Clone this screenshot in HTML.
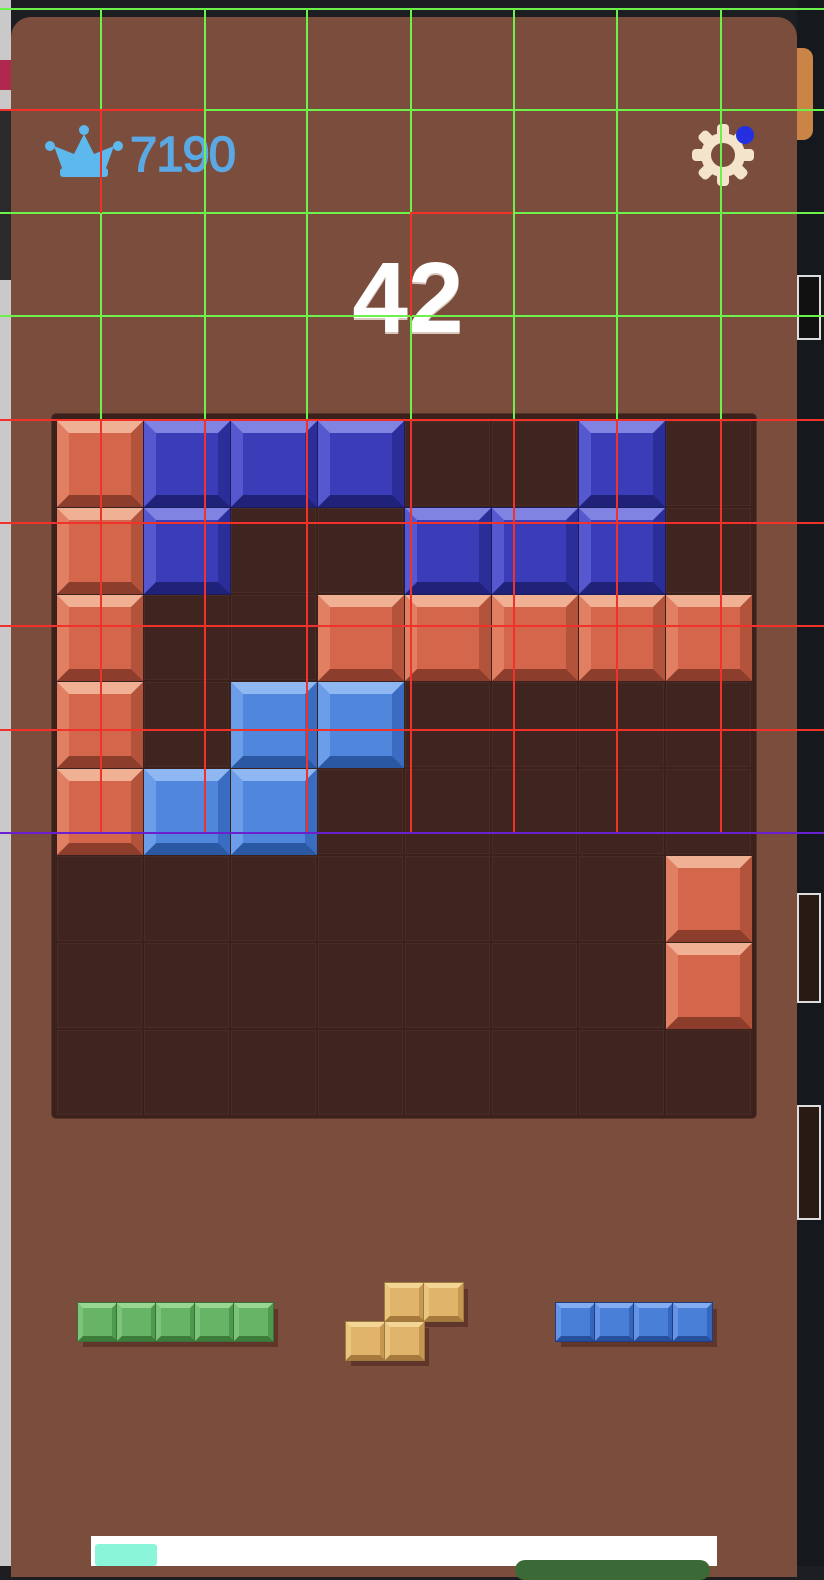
<!DOCTYPE html>
<html><head><meta charset="utf-8"><style>
*{margin:0;padding:0}
body{width:824px;height:1566px;overflow:hidden;background:#1c1e22;position:relative;font-family:"Liberation Sans",sans-serif}
.a{position:absolute}
.panel{left:11px;top:17px;width:786px;height:1560px;background:#7b4d3d;border-radius:20px 20px 0 0}
.board{left:52px;top:414px;width:704px;height:704px;background:#3a211c;border-radius:4px;box-shadow:0 0 0 1px #5a3429}
.e{position:absolute;width:85px;height:85px;background:#40241f;box-shadow:inset 0 0 0 1px #4a2b25}
.b{position:absolute;width:86px;height:86px;box-sizing:border-box;border:12px solid}
.r{background:#d4664c;border-top-color:#efb094;border-left-color:#e07f62;border-right-color:#b4533b;border-bottom-color:#8d3d2b}
.d{background:#3b3db8;border-top-color:#8083e2;border-left-color:#5658cf;border-right-color:#2b2d99;border-bottom-color:#1f2278;outline:1px solid #1a1c5c}
.l{background:#5087dd;border-top-color:#8fb8f2;border-left-color:#6c9de8;border-right-color:#3a6cc1;border-bottom-color:#2b58a3}
.s{position:absolute;width:39px;height:38px;box-sizing:border-box;border:5px solid;box-shadow:5px 6px 0 rgba(80,40,30,.6)}
.g{background:#68b466;border-top-color:#98d692;border-left-color:#7cc479;border-right-color:#4e9a4d;border-bottom-color:#3c7d3c;outline:1px solid #3b6e3a}
.y{background:#e0b46a;border-top-color:#f3d595;border-left-color:#e9c57e;border-right-color:#c59750;border-bottom-color:#a67a3c;outline:1px solid #9c7a40}
.u{background:#4a7fd8;border-top-color:#84acf0;border-left-color:#6594e6;border-right-color:#3566bd;border-bottom-color:#274f9c;outline:1px solid #1f3e82}
.gv{position:absolute;width:2px;background:#6cf24a}
.gh{position:absolute;height:2px;background:#6cf24a}
.rv{position:absolute;width:2px;background:#f0322a}
.rh{position:absolute;height:2px;background:#f0322a}
</style></head><body>
<div class="a" style="left:0;top:0;width:11px;height:1566px;background:#c9c9c9"></div>
<div class="a" style="left:0;top:60px;width:11px;height:30px;background:#b0284e"></div>
<div class="a" style="left:0;top:110px;width:11px;height:170px;background:#2a2a2a"></div>
<div class="a" style="left:797px;top:0;width:27px;height:1566px;background:#15181c"></div>
<div class="a" style="left:797px;top:48px;width:16px;height:92px;background:#c98446;border-radius:0 10px 10px 0"></div>
<div class="a" style="left:797px;top:275px;width:24px;height:65px;border:2px solid #ddd;background:#111;box-sizing:border-box"></div>
<div class="a" style="left:797px;top:893px;width:24px;height:110px;border:2px solid #ddd;background:#2a1a14;box-sizing:border-box"></div>
<div class="a" style="left:797px;top:1105px;width:24px;height:115px;border:2px solid #ddd;background:#2a1a14;box-sizing:border-box"></div>
<div class="a panel"></div>

<svg class="a" style="left:44px;top:124px" width="80" height="56" viewBox="0 0 80 56">
<g fill="#5db8ee"><circle cx="40" cy="6" r="5"/><circle cx="6" cy="22" r="5"/><circle cx="74" cy="22" r="5"/>
<path d="M40 10 L50 30 L70 22 L62 44 L18 44 L10 22 L30 30 Z"/><rect x="16" y="44" width="48" height="9" rx="3"/></g></svg>
<div class="a" style="left:130px;top:127px;font-size:49px;color:#5aa8e4;letter-spacing:-1px;line-height:56px;-webkit-text-stroke:1.5px #5aa8e4">7190</div>

<svg class="a" style="left:690px;top:122px" width="70" height="70" viewBox="0 0 70 70">
<g fill="#f4e4cb" transform="translate(33,33)">
<circle r="22"/>
<g id="t"><rect x="-6" y="-31" width="12" height="14" rx="4"/></g>
<use href="#t" transform="rotate(45)"/><use href="#t" transform="rotate(90)"/><use href="#t" transform="rotate(135)"/><use href="#t" transform="rotate(180)"/><use href="#t" transform="rotate(225)"/><use href="#t" transform="rotate(270)"/><use href="#t" transform="rotate(315)"/>
<circle r="12" fill="#7b4d3d"/></g>
<circle cx="55" cy="13" r="9" fill="#2430e0"/></svg>

<div class="a" style="left:308px;top:248px;width:200px;text-align:center;font-size:100px;font-weight:bold;color:#fff;line-height:100px;text-shadow:0 2px 0 #d8c8c0">42</div>

<div class="a board">
<div class="e" style="left:5px;top:7px"></div><div class="e" style="left:92px;top:7px"></div><div class="e" style="left:179px;top:7px"></div><div class="e" style="left:266px;top:7px"></div><div class="e" style="left:353px;top:7px"></div><div class="e" style="left:440px;top:7px"></div><div class="e" style="left:527px;top:7px"></div><div class="e" style="left:614px;top:7px"></div>
<div class="e" style="left:5px;top:94px"></div><div class="e" style="left:92px;top:94px"></div><div class="e" style="left:179px;top:94px"></div><div class="e" style="left:266px;top:94px"></div><div class="e" style="left:353px;top:94px"></div><div class="e" style="left:440px;top:94px"></div><div class="e" style="left:527px;top:94px"></div><div class="e" style="left:614px;top:94px"></div>
<div class="e" style="left:5px;top:181px"></div><div class="e" style="left:92px;top:181px"></div><div class="e" style="left:179px;top:181px"></div><div class="e" style="left:266px;top:181px"></div><div class="e" style="left:353px;top:181px"></div><div class="e" style="left:440px;top:181px"></div><div class="e" style="left:527px;top:181px"></div><div class="e" style="left:614px;top:181px"></div>
<div class="e" style="left:5px;top:268px"></div><div class="e" style="left:92px;top:268px"></div><div class="e" style="left:179px;top:268px"></div><div class="e" style="left:266px;top:268px"></div><div class="e" style="left:353px;top:268px"></div><div class="e" style="left:440px;top:268px"></div><div class="e" style="left:527px;top:268px"></div><div class="e" style="left:614px;top:268px"></div>
<div class="e" style="left:5px;top:355px"></div><div class="e" style="left:92px;top:355px"></div><div class="e" style="left:179px;top:355px"></div><div class="e" style="left:266px;top:355px"></div><div class="e" style="left:353px;top:355px"></div><div class="e" style="left:440px;top:355px"></div><div class="e" style="left:527px;top:355px"></div><div class="e" style="left:614px;top:355px"></div>
<div class="e" style="left:5px;top:442px"></div><div class="e" style="left:92px;top:442px"></div><div class="e" style="left:179px;top:442px"></div><div class="e" style="left:266px;top:442px"></div><div class="e" style="left:353px;top:442px"></div><div class="e" style="left:440px;top:442px"></div><div class="e" style="left:527px;top:442px"></div><div class="e" style="left:614px;top:442px"></div>
<div class="e" style="left:5px;top:529px"></div><div class="e" style="left:92px;top:529px"></div><div class="e" style="left:179px;top:529px"></div><div class="e" style="left:266px;top:529px"></div><div class="e" style="left:353px;top:529px"></div><div class="e" style="left:440px;top:529px"></div><div class="e" style="left:527px;top:529px"></div><div class="e" style="left:614px;top:529px"></div>
<div class="e" style="left:5px;top:616px"></div><div class="e" style="left:92px;top:616px"></div><div class="e" style="left:179px;top:616px"></div><div class="e" style="left:266px;top:616px"></div><div class="e" style="left:353px;top:616px"></div><div class="e" style="left:440px;top:616px"></div><div class="e" style="left:527px;top:616px"></div><div class="e" style="left:614px;top:616px"></div>

<div class="b r" style="left:5px;top:7px"></div><div class="b d" style="left:92px;top:7px"></div><div class="b d" style="left:179px;top:7px"></div><div class="b d" style="left:266px;top:7px"></div><div class="b d" style="left:527px;top:7px"></div>
<div class="b r" style="left:5px;top:94px"></div><div class="b d" style="left:92px;top:94px"></div><div class="b d" style="left:353px;top:94px"></div><div class="b d" style="left:440px;top:94px"></div><div class="b d" style="left:527px;top:94px"></div>
<div class="b r" style="left:5px;top:181px"></div><div class="b r" style="left:266px;top:181px"></div><div class="b r" style="left:353px;top:181px"></div><div class="b r" style="left:440px;top:181px"></div><div class="b r" style="left:527px;top:181px"></div><div class="b r" style="left:614px;top:181px"></div>
<div class="b r" style="left:5px;top:268px"></div><div class="b l" style="left:179px;top:268px"></div><div class="b l" style="left:266px;top:268px"></div>
<div class="b r" style="left:5px;top:355px"></div><div class="b l" style="left:92px;top:355px"></div><div class="b l" style="left:179px;top:355px"></div>
<div class="b r" style="left:614px;top:442px"></div>
<div class="b r" style="left:614px;top:529px"></div>
</div>

<div class="s g" style="left:78px;top:1303px"></div><div class="s g" style="left:117px;top:1303px"></div><div class="s g" style="left:156px;top:1303px"></div><div class="s g" style="left:195px;top:1303px"></div><div class="s g" style="left:234px;top:1303px"></div>
<div class="s y" style="left:385px;top:1283px"></div><div class="s y" style="left:424px;top:1283px"></div><div class="s y" style="left:346px;top:1322px"></div><div class="s y" style="left:385px;top:1322px"></div>
<div class="s u" style="left:556px;top:1303px"></div><div class="s u" style="left:595px;top:1303px"></div><div class="s u" style="left:634px;top:1303px"></div><div class="s u" style="left:673px;top:1303px"></div>

<div class="a" style="left:91px;top:1536px;width:626px;height:30px;background:#fff"></div>
<div class="a" style="left:95px;top:1544px;width:62px;height:22px;background:#8af5d8;border-radius:3px"></div>
<div class="a" style="left:515px;top:1560px;width:195px;height:20px;background:#3b6a36;border-radius:12px"></div>

<div class="gh" style="left:0;top:8px;width:824px"></div>
<div class="gh" style="left:205px;top:109px;width:619px"></div><div class="rh" style="left:0;top:109px;width:205px"></div>
<div class="gh" style="left:0;top:212px;width:411px"></div><div class="rh" style="left:411px;top:212px;width:103px"></div><div class="gh" style="left:514px;top:212px;width:310px"></div>
<div class="gh" style="left:0;top:315px;width:824px"></div>
<div class="gv" style="left:100px;top:8px;height:101px"></div><div class="rv" style="left:100px;top:109px;height:104px"></div><div class="gv" style="left:100px;top:213px;height:206px"></div>
<div class="gv" style="left:204px;top:8px;height:411px"></div>
<div class="gv" style="left:306px;top:8px;height:411px"></div>
<div class="gv" style="left:410px;top:8px;height:204px"></div><div class="rv" style="left:410px;top:212px;height:104px"></div><div class="gv" style="left:410px;top:316px;height:103px"></div>
<div class="gv" style="left:513px;top:8px;height:411px"></div>
<div class="gv" style="left:616px;top:8px;height:411px"></div>
<div class="gv" style="left:720px;top:8px;height:411px"></div>
<div class="rh" style="left:0;top:419px;width:824px"></div>
<div class="rh" style="left:0;top:522px;width:824px"></div>
<div class="rh" style="left:0;top:625px;width:824px"></div>
<div class="rh" style="left:0;top:729px;width:824px"></div>
<div class="rh" style="left:0;top:832px;width:824px;background:#6a1fd0"></div>
<div class="rv" style="left:100px;top:419px;height:413px"></div>
<div class="rv" style="left:204px;top:419px;height:413px"></div>
<div class="rv" style="left:306px;top:419px;height:413px"></div>
<div class="rv" style="left:410px;top:419px;height:413px"></div>
<div class="rv" style="left:513px;top:419px;height:413px"></div>
<div class="rv" style="left:616px;top:419px;height:413px"></div>
<div class="rv" style="left:720px;top:419px;height:413px"></div>
</body></html>
